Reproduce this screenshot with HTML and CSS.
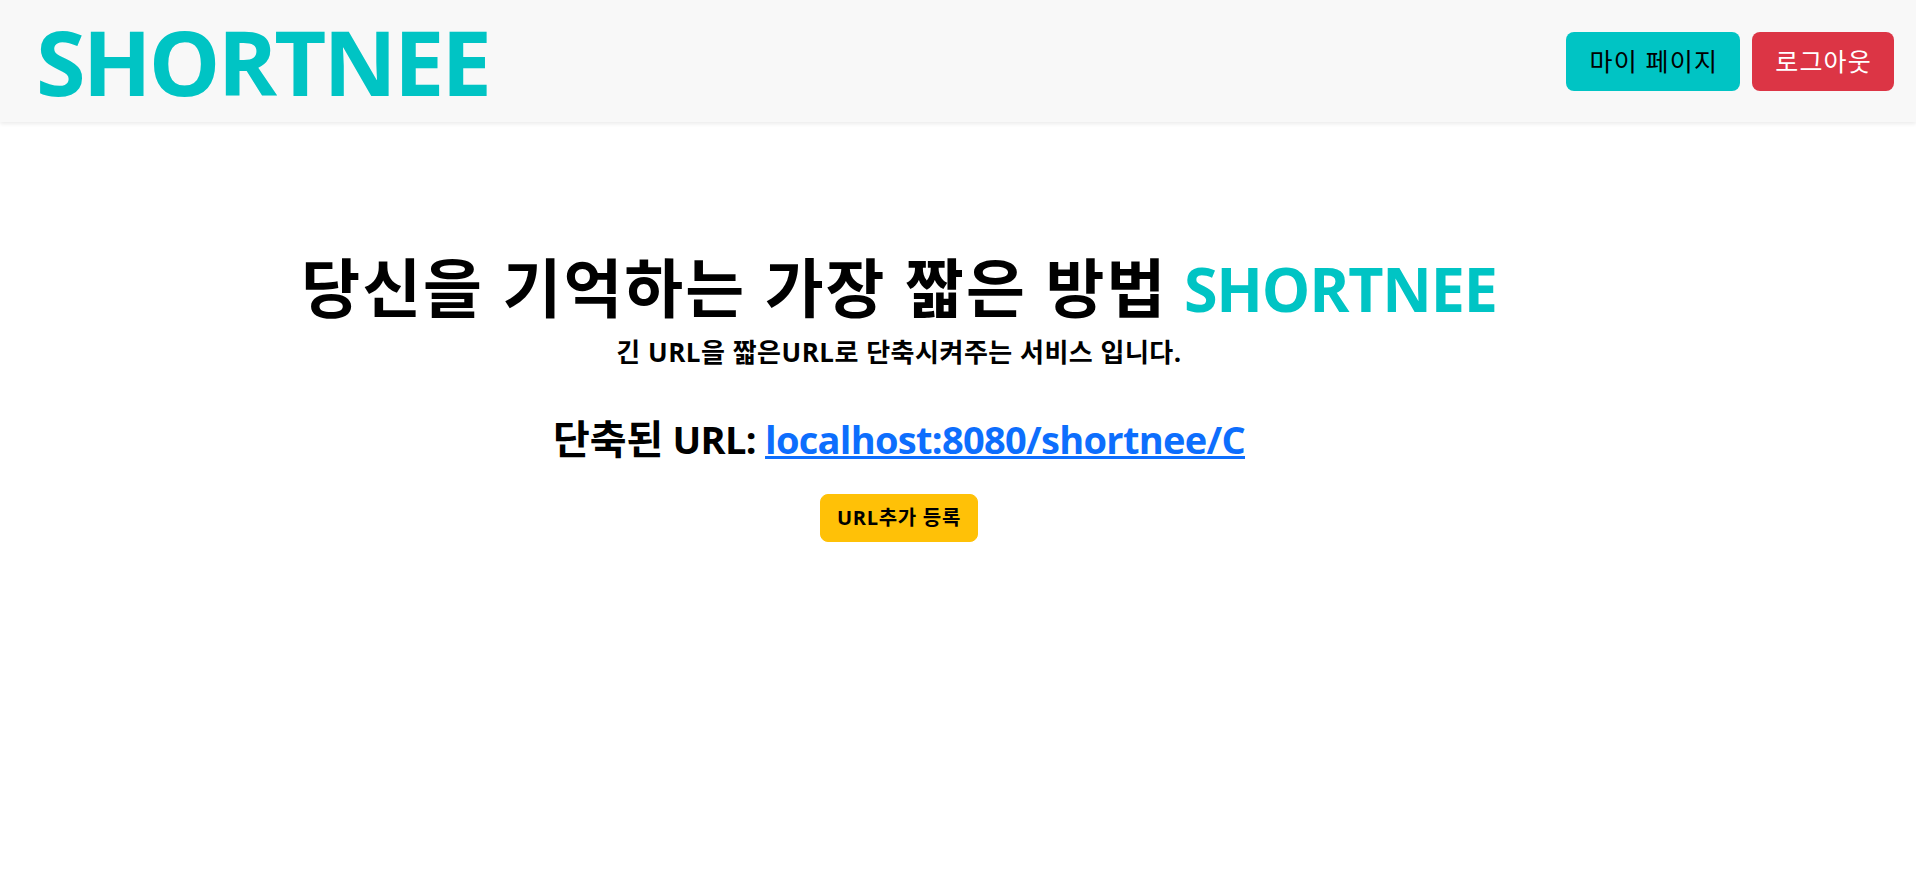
FILE: index.html
```html
<!DOCTYPE html>
<html lang="ko">
<head>
<meta charset="utf-8">
<title>SHORTNEE</title>
<link rel="stylesheet" href="styles.css">
</head>
<body>
<header class="topbar">
  <a class="logo" href="#">SHORTNEE</a>
  <nav class="actions">
    <a class="btn btn-mypage" href="#">마이 페이지</a>
    <a class="btn btn-logout" href="#">로그아웃</a>
  </nav>
</header>
<main class="hero">
  <h1 class="title"><span class="ko">당신을 기억하는 가장 짧은 방법</span> <span class="brand">SHORTNEE</span></h1>
  <p class="subtitle">긴 URL을 짧은URL로 단축시켜주는 서비스 입니다.</p>
  <h2 class="result"><span class="ko">단축된</span> URL: <a class="short-link" href="#">localhost:8080/shortnee/C</a></h2>
  <button class="btn-add" type="button">URL추가 등록</button>
</main>
</body>
</html>
```
FILE: styles.css
```css
* { box-sizing: border-box; }
html, body { margin: 0; padding: 0; }
body {
  font-family: "Open Sans", "Noto Sans CJK KR", sans-serif;
  color: #000;
  background: #fff;
}
.topbar {
  height: 122px;
  background: #f8f8f8;
  box-shadow: 0 2px 4px rgba(0, 0, 0, 0.08);
  display: flex;
  align-items: center;
  justify-content: space-between;
  padding: 0 22px 0 36px;
}
.logo {
  font-size: 90px;
  font-weight: 700;
  line-height: 1;
  color: #00c4c4;
  text-decoration: none;
  letter-spacing: -2.8px;
}
.actions { display: flex; gap: 12px; }
.btn {
  display: inline-block;
  font-size: 25px;
  line-height: 35px;
  letter-spacing: 1.2px;
  padding: 12px 22px 12px 23px;
  border-radius: 8px;
  text-decoration: none;
}
.btn-mypage { background: #00c4c4; color: #000; }
.btn-logout { background: #dc3545; color: #fff; }
.hero {
  text-align: center;
  padding: 128px 118px 0 0;
}
.title {
  margin: 0;
  font-size: 64px;
  font-weight: 700;
  line-height: 1.2;
}
.title .ko { letter-spacing: 2px; }
.title .brand { color: #00c4c4; font-size: 61px; letter-spacing: -1.2px; }
.subtitle {
  margin: 11px 0 0;
  font-size: 26px;
  font-weight: 700;
  line-height: 1.1;
  letter-spacing: 0.5px;
}
.result {
  margin: 49px 0 0;
  font-size: 38px;
  font-weight: 700;
  line-height: 1.2;
  letter-spacing: -0.7px;
}
.result .ko { font-size: 40px; letter-spacing: 0; }
.short-link { color: #0d6efd; text-decoration: underline; }
.btn-add {
  margin-top: 31px;
  font-family: inherit;
  font-size: 20px;
  font-weight: 700;
  line-height: 1.5;
  letter-spacing: 0.7px;
  padding: 8px 16px;
  background: #ffc107;
  border: 1px solid #ffc107;
  border-radius: 8px;
  color: #000;
}
```
